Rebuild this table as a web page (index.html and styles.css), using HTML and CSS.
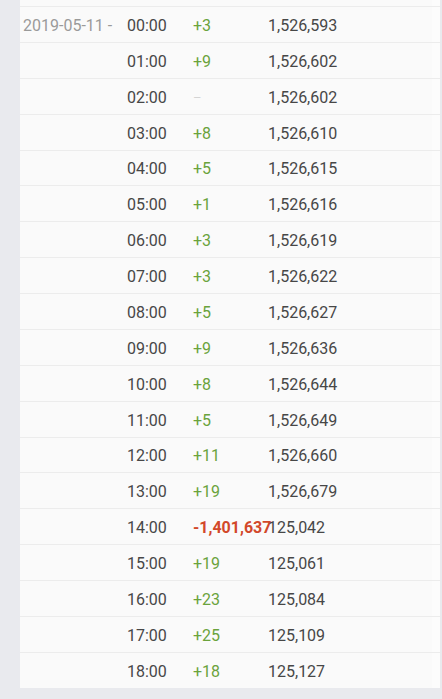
FILE: index.html
```html
<!DOCTYPE html>
<html>
<head>
<meta charset="utf-8">
<link rel="stylesheet" href="styles.css">
</head>
<body>
<div class="panel">
  <div class="row"><span class="date">2019-05-11 -</span><span class="time">00:00</span><span class="up">+3</span><span class="total">1,526,593</span></div>
  <div class="row"><span class="date"></span><span class="time">01:00</span><span class="up">+9</span><span class="total">1,526,602</span></div>
  <div class="row"><span class="date"></span><span class="time">02:00</span><span class="none">–</span><span class="total">1,526,602</span></div>
  <div class="row"><span class="date"></span><span class="time">03:00</span><span class="up">+8</span><span class="total">1,526,610</span></div>
  <div class="row"><span class="date"></span><span class="time">04:00</span><span class="up">+5</span><span class="total">1,526,615</span></div>
  <div class="row"><span class="date"></span><span class="time">05:00</span><span class="up">+1</span><span class="total">1,526,616</span></div>
  <div class="row"><span class="date"></span><span class="time">06:00</span><span class="up">+3</span><span class="total">1,526,619</span></div>
  <div class="row"><span class="date"></span><span class="time">07:00</span><span class="up">+3</span><span class="total">1,526,622</span></div>
  <div class="row"><span class="date"></span><span class="time">08:00</span><span class="up">+5</span><span class="total">1,526,627</span></div>
  <div class="row"><span class="date"></span><span class="time">09:00</span><span class="up">+9</span><span class="total">1,526,636</span></div>
  <div class="row"><span class="date"></span><span class="time">10:00</span><span class="up">+8</span><span class="total">1,526,644</span></div>
  <div class="row"><span class="date"></span><span class="time">11:00</span><span class="up">+5</span><span class="total">1,526,649</span></div>
  <div class="row"><span class="date"></span><span class="time">12:00</span><span class="up">+11</span><span class="total">1,526,660</span></div>
  <div class="row"><span class="date"></span><span class="time">13:00</span><span class="up">+19</span><span class="total">1,526,679</span></div>
  <div class="row"><span class="date"></span><span class="time">14:00</span><span class="down">-1,401,637</span><span class="total">125,042</span></div>
  <div class="row"><span class="date"></span><span class="time">15:00</span><span class="up">+19</span><span class="total">125,061</span></div>
  <div class="row"><span class="date"></span><span class="time">16:00</span><span class="up">+23</span><span class="total">125,084</span></div>
  <div class="row"><span class="date"></span><span class="time">17:00</span><span class="up">+25</span><span class="total">125,109</span></div>
  <div class="row"><span class="date"></span><span class="time">18:00</span><span class="up">+18</span><span class="total">125,127</span></div>
</div>
</body>
</html>
```
FILE: styles.css
```css
html, body {
  margin: 0;
  padding: 0;
  background: #e9eaee;
}
body {
  font-family: Roboto, "Noto Sans", sans-serif;
  font-size: 16px;
  color: #444;
}
.panel {
  margin-left: 20px;
  width: 420px;
  background: #fafafa;
  padding-top: 6px;
  box-shadow: inset -8px 0 0 #fcfcfc;
}
.row {
  box-sizing: border-box;
  height: 35.88px;
  border-top: 1px solid #ececec;
  display: grid;
  grid-template-columns: 107px 66px 75px 1fr;
  align-items: center;
  white-space: nowrap;
}
.row span {
  overflow: visible;
  line-height: 20px;
  padding-top: 3px;
}
.date {
  padding-left: 3px;
  color: #9a9a9a;
}
.time {
  color: #474747;
}
.up {
  color: #6aa33c;
}
.none {
  color: #d4d4d4;
  font-size: 13px;
}
.down {
  color: #d2482a;
  font-weight: bold;
}
.total {
  color: #474747;
}
```
